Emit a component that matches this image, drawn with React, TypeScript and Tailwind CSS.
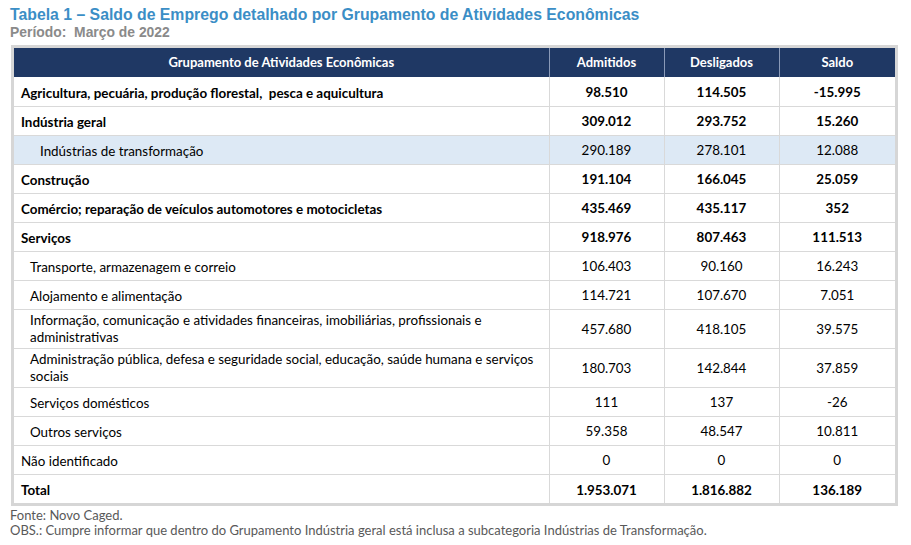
const rows = [
  { label: "Agricultura, pecuária, produção florestal,  pesca e aquicultura", a: "98.510", d: "114.505", s: "-15.995", bold: true },
  { label: "Indústria geral", a: "309.012", d: "293.752", s: "15.260", bold: true },
  { label: "Indústrias de transformação", a: "290.189", d: "278.101", s: "12.088", indent: "pl-[26px]", hl: true },
  { label: "Construção", a: "191.104", d: "166.045", s: "25.059", bold: true },
  { label: "Comércio; reparação de veículos automotores e motocicletas", a: "435.469", d: "435.117", s: "352", bold: true },
  { label: "Serviços", a: "918.976", d: "807.463", s: "111.513", bold: true },
  { label: "Transporte, armazenagem e correio", a: "106.403", d: "90.160", s: "16.243", indent: "pl-[16px]" },
  { label: "Alojamento e alimentação", a: "114.721", d: "107.670", s: "7.051", indent: "pl-[16px]" },
  { label: "Informação, comunicação e atividades financeiras, imobiliárias, profissionais e administrativas", a: "457.680", d: "418.105", s: "39.575", indent: "pl-[16px]", tall: true },
  { label: "Administração pública, defesa e seguridade social, educação, saúde humana e serviços sociais", a: "180.703", d: "142.844", s: "37.859", indent: "pl-[16px]", tall: true },
  { label: "Serviços domésticos", a: "111", d: "137", s: "-26", indent: "pl-[16px]" },
  { label: "Outros serviços", a: "59.358", d: "48.547", s: "10.811", indent: "pl-[16px]" },
  { label: "Não identificado", a: "0", d: "0", s: "0" },
  { label: "Total", a: "1.953.071", d: "1.816.882", s: "136.189", bold: true },
];

export default function App() {
  return (
    <div className="w-[911px] h-[545px] bg-white px-[10px] pt-[6px] overflow-hidden">
      <h1 className="font-['Liberation_Sans',Arial,sans-serif] font-bold text-[15.8px] leading-[18px] text-[#3b8ec6]">
        Tabela 1 – Saldo de Emprego detalhado por Grupamento de Atividades Econômicas
      </h1>
      <p className="font-['Liberation_Sans',Arial,sans-serif] font-bold text-[13.9px] leading-[16px] text-[#8a8a8a] whitespace-pre">
        Período:  Março de 2022
      </p>

      <div className="mt-[5px] ml-px w-[887px] border-[3px] border-[#d6d6d6]">
        <table className="w-full border-collapse font-['Lato','Open_Sans',sans-serif] text-[13.4px] text-black">
          <thead>
            <tr className="h-[29px] bg-[#1f3864] text-white font-bold text-[13px]">
              <th className="w-[535px] font-bold">Grupamento de Atividades Econômicas</th>
              <th className="w-[115px] border-l border-[#8a9ab8] font-bold">Admitidos</th>
              <th className="w-[115px] border-l border-[#8a9ab8] font-bold">Desligados</th>
              <th className="border-l border-[#8a9ab8] font-bold">Saldo</th>
            </tr>
          </thead>
          <tbody>
            {rows.map((r, i) => (
              <tr
                key={i}
                className={`${r.tall ? "h-[39px]" : "h-[29px]"} ${r.hl ? "bg-[#dde9f5]" : "bg-white"} ${r.bold ? "font-bold" : ""} ${i > 0 ? "border-t border-[#d9d9d9]" : ""}`}
              >
                <td className={`px-[7px] whitespace-pre-wrap ${r.tall ? "pt-px leading-[17px]" : "pt-[3px] leading-[18px]"} ${r.indent ?? ""}`}>{r.label}</td>
                <td className="border-l border-[#d9d9d9] pt-[2px] text-center">{r.a}</td>
                <td className="border-l border-[#d9d9d9] pt-[2px] text-center">{r.d}</td>
                <td className="border-l border-[#d9d9d9] pt-[2px] text-center">{r.s}</td>
              </tr>
            ))}
          </tbody>
        </table>
      </div>

      <div className="mt-[2px] font-['Lato','Open_Sans',sans-serif] text-[13px] leading-[15px] text-[#595959]">
        <p>Fonte: Novo Caged.</p>
        <p>OBS.: Cumpre informar que dentro do Grupamento Indústria geral está inclusa a subcategoria Indústrias de Transformação.</p>
      </div>
    </div>
  );
}
